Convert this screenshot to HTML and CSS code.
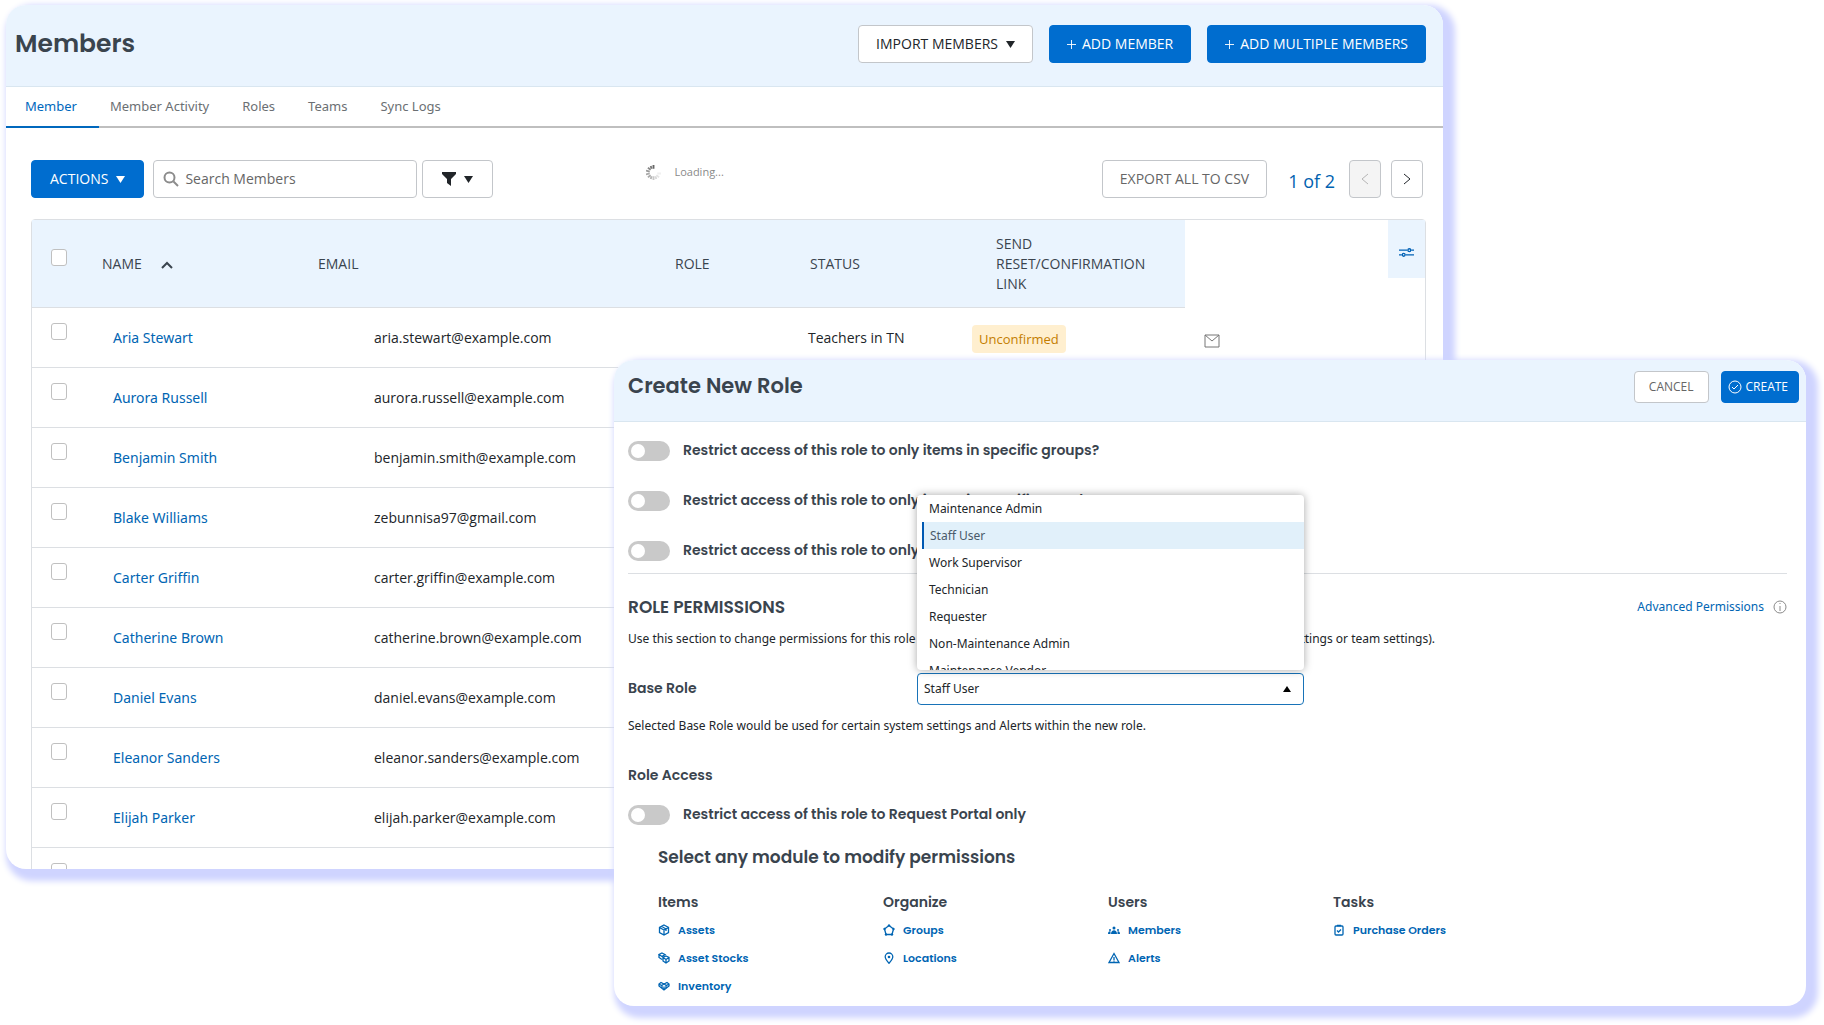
FILE: index.html
```html
<!DOCTYPE html>
<html lang="en">
<head>
<meta charset="utf-8">
<meta name="viewport" content="width=device-width, initial-scale=1">
<title>Members</title>
<link rel="stylesheet" href="styles.css">
</head>
<body>
<svg class="sprite" aria-hidden="true">
  <symbol id="i-down" viewBox="0 0 10 10"><path d="M0 1h10L5 9z"/></symbol>
  <symbol id="i-mail" viewBox="0 0 16 14"><path d="M1 1h14v12H1zM1 1l7 6 7-6" fill="none" stroke="currentColor"/></symbol>
</svg>
<main class="stage">
  <section class="card members" aria-labelledby="members-title">
    <header class="card-head">
      <h1 id="members-title">Members</h1>
      <div class="head-actions">
        <button class="btn" type="button">IMPORT MEMBERS <svg class="caret"><use href="#i-down"/></svg></button>
        <button class="btn primary" type="button"><svg class="plus" viewBox="0 0 10 10"><path d="M5 0v10M0 5h10"/></svg>ADD MEMBER</button>
        <button class="btn primary" type="button"><svg class="plus" viewBox="0 0 10 10"><path d="M5 0v10M0 5h10"/></svg>ADD MULTIPLE MEMBERS</button>
      </div>
    </header>
    <nav class="tabs" aria-label="Member sections">
      <a class="active" href="#">Member</a>
      <a href="#">Member Activity</a>
      <a href="#">Roles</a>
      <a href="#">Teams</a>
      <a href="#">Sync Logs</a>
    </nav>
    <div class="toolbar">
      <div class="tools">
        <button class="btn primary actions" type="button">ACTIONS <svg class="caret"><use href="#i-down"/></svg></button>
        <label class="search">
          <svg viewBox="0 0 16 16"><circle cx="6.500" cy="6.500" r="5" /><path d="M10.500 10.500L15 15"/></svg>
          <input type="text" placeholder="Search Members" aria-label="Search Members">
        </label>
        <button class="btn filter" type="button" aria-label="Filter">
          <svg class="funnel" viewBox="0 0 14 14"><path d="M0 0h14v2L9 7v7l-4-3V7L0 2z"/></svg>
          <svg class="caret"><use href="#i-down"/></svg>
        </button>
      </div>
      <div class="loading">
        <svg viewBox="0 0 16 16">
          <path d="M8 0v4" stroke="#666"/><path d="M5 1l1 3" stroke="#777"/><path d="M2 3l3 2" stroke="#888"/>
          <path d="M0 6l4 1" stroke="#999"/><path d="M0 10l4-1" stroke="#aaa"/><path d="M2 13l3-2" stroke="#aaa"/>
          <path d="M5 15l1-3" stroke="#b4b4b4"/><path d="M8 16v-4" stroke="#c8c8c8"/><path d="M11 15l-1-3" stroke="#d8d8d8"/>
          <path d="M14 13l-3-2" stroke="#e4e4e4"/><path d="M16 9h-4" stroke="#f0f0f0"/>
        </svg>
        <span>Loading...</span>
      </div>
      <div class="paging">
        <button class="btn muted" type="button">EXPORT ALL TO CSV</button>
        <span class="count">1 of 2</span>
        <button class="btn page" type="button" aria-label="Previous page" disabled><svg viewBox="0 0 8 12"><path d="M7 1L1 6l6 5"/></svg></button>
        <button class="btn page" type="button" aria-label="Next page"><svg viewBox="0 0 8 12"><path d="M1 1l6 5-6 5"/></svg></button>
      </div>
    </div>
    <div class="table-wrap">
      <table>
        <colgroup><col class="c-check"><col class="c-name"><col class="c-email"><col class="c-role"><col class="c-status"><col class="c-link"><col></colgroup>
        <thead>
          <tr>
            <th class="check"><input type="checkbox" aria-label="Select all members"></th>
            <th>NAME <svg class="sort" viewBox="0 0 12 8"><path d="M1 7l5-5 5 5"/></svg></th>
            <th>EMAIL</th>
            <th>ROLE</th>
            <th>STATUS</th>
            <th class="send">SEND RESET/CONFIRMATION LINK</th>
            <th class="config"><button type="button" aria-label="Choose columns"><svg viewBox="0 0 16 12"><path d="M0 4h9M13 4h3M0 9h3M7 9h9"/><circle cx="11" cy="4" r="1.500"/><circle cx="5" cy="9" r="1.500"/></svg></button></th>
          </tr>
        </thead>
        <tbody>
          <tr><td class="check"><input type="checkbox" aria-label="Select Aria Stewart"></td><td class="name"><a href="#">Aria Stewart</a></td><td class="email">aria.stewart@example.com</td><td></td><td class="team">Teachers in TN</td><td class="state"><span class="pill">Unconfirmed</span></td><td class="mail"><svg><use href="#i-mail"/></svg></td></tr>
          <tr><td class="check"><input type="checkbox" aria-label="Select Aurora Russell"></td><td class="name"><a href="#">Aurora Russell</a></td><td class="email">aurora.russell@example.com</td><td colspan="4"></td></tr>
          <tr><td class="check"><input type="checkbox" aria-label="Select Benjamin Smith"></td><td class="name"><a href="#">Benjamin Smith</a></td><td class="email">benjamin.smith@example.com</td><td colspan="4"></td></tr>
          <tr><td class="check"><input type="checkbox" aria-label="Select Blake Williams"></td><td class="name"><a href="#">Blake Williams</a></td><td class="email">zebunnisa97@gmail.com</td><td colspan="4"></td></tr>
          <tr><td class="check"><input type="checkbox" aria-label="Select Carter Griffin"></td><td class="name"><a href="#">Carter Griffin</a></td><td class="email">carter.griffin@example.com</td><td colspan="4"></td></tr>
          <tr><td class="check"><input type="checkbox" aria-label="Select Catherine Brown"></td><td class="name"><a href="#">Catherine Brown</a></td><td class="email">catherine.brown@example.com</td><td colspan="4"></td></tr>
          <tr><td class="check"><input type="checkbox" aria-label="Select Daniel Evans"></td><td class="name"><a href="#">Daniel Evans</a></td><td class="email">daniel.evans@example.com</td><td colspan="4"></td></tr>
          <tr><td class="check"><input type="checkbox" aria-label="Select Eleanor Sanders"></td><td class="name"><a href="#">Eleanor Sanders</a></td><td class="email">eleanor.sanders@example.com</td><td colspan="4"></td></tr>
          <tr><td class="check"><input type="checkbox" aria-label="Select Elijah Parker"></td><td class="name"><a href="#">Elijah Parker</a></td><td class="email">elijah.parker@example.com</td><td colspan="4"></td></tr>
          <tr><td class="check"><input type="checkbox" aria-label="Select member"></td><td colspan="6"></td></tr>
        </tbody>
      </table>
    </div>
  </section>

  <section class="card role" aria-labelledby="role-title">
    <header class="card-head">
      <h2 id="role-title">Create New Role</h2>
      <div class="head-actions">
        <button class="btn muted" type="button">CANCEL</button>
        <button class="btn primary" type="button"><svg class="tick" viewBox="0 0 14 14"><circle cx="7" cy="7" r="6"/><path d="M4 7l2 2 4-4"/></svg>CREATE</button>
      </div>
    </header>
    <div class="role-body">
      <div class="switches">
        <label class="switch"><input type="checkbox" role="switch"><span>Restrict access of this role to only items in specific groups?</span></label>
        <label class="switch"><input type="checkbox" role="switch"><span>Restrict access of this role to only items in specific members?</span></label>
        <label class="switch"><input type="checkbox" role="switch"><span>Restrict access of this role to only</span></label>
      </div>
      <div class="section-head">
        <h3>ROLE PERMISSIONS</h3>
        <div class="advanced">
          <a href="#">Advanced Permissions</a>
          <svg viewBox="0 0 14 14"><circle cx="7" cy="7" r="6"/><path d="M7 6v5M7 3v1"/></svg>
        </div>
      </div>
      <div class="note split"><span>Use this section to change permissions for this role</span><span>(excluding system settings or team settings).</span></div>
      <div class="base-role">
        <label for="base-role">Base Role</label>
        <div class="combo">
          <select id="base-role"><option>Staff User</option></select>
          <svg class="up" viewBox="0 0 8 6"><path d="M0 6h8L4 0z"/></svg>
          <ul class="menu">
            <li>Maintenance Admin</li>
            <li class="selected">Staff User</li>
            <li>Work Supervisor</li>
            <li>Technician</li>
            <li>Requester</li>
            <li>Non-Maintenance Admin</li>
            <li>Maintenance Vendor</li>
          </ul>
        </div>
      </div>
      <p class="note">Selected Base Role would be used for certain system settings and Alerts within the new role.</p>
      <h4>Role Access</h4>
      <label class="switch"><input type="checkbox" role="switch"><span>Restrict access of this role to Request Portal only</span></label>
      <div class="modules">
        <h3>Select any module to modify permissions</h3>
        <div class="module-grid">
          <div class="module"><h4>Items</h4>
            <a href="#"><svg viewBox="0 0 12 12"><path d="M6 1l4.500 2.500v5L6 11 1.500 8.500v-5zM1.500 3.500L6 6l4.500-2.500M6 6v5M3.500 2.300L8 5v2"/></svg>Assets</a>
            <a href="#"><svg viewBox="0 0 12 12"><path d="M4 1l3 1.500L4 4.500 1 2.500zM1 2.500v3l3 2M8 4l3 1.500v3.500L8 11 5 9V5.500zM5 5.500L8 7.500l3-2M8 7.500V11"/></svg>Asset Stocks</a>
            <a href="#"><svg viewBox="0 0 12 12"><path d="M3 2.500L1 4v2l5 4 5-4V4L9 2.500 6 4zM1 4l2.500 1.500L6 4l2.500 1.500L11 4M4 5.500V8M8 5.500V8M6 6.500v3"/></svg>Inventory</a>
          </div>
          <div class="module"><h4>Organize</h4>
            <a href="#"><svg viewBox="0 0 12 12"><path d="M6 1.500l4.500 3.500L9 10.500H3L1.500 5z"/><path class="solid" d="M6 0l1.500 1.500L6 3 4.500 1.500zM1.500 3.500L3 5 1.500 6.500 0 5zM10.500 3.500L12 5l-1.500 1.500L9 5zM3 9l1.500 1.500L3 12l-1.500-1.500zM9 9l1.500 1.500L9 12l-1.500-1.500z"/></svg>Groups</a>
            <a href="#"><svg viewBox="0 0 12 12"><path d="M6 11.300C3.500 8.500 2.200 6.800 2.200 4.800a3.800 3.800 0 0 1 7.600 0c0 2-1.300 3.700-3.800 6.500z"/><circle class="solid" cx="6" cy="5" r="1.300"/></svg>Locations</a>
          </div>
          <div class="module"><h4>Users</h4>
            <a href="#"><svg viewBox="0 0 12 12"><g class="solid"><circle cx="6" cy="4" r="1.500"/><circle cx="2" cy="6" r="1"/><circle cx="10" cy="6" r="1"/><path d="M3 10c0-5 6-5 6 0zM0 10c0-2 1-3 2.500-2.500V10zM12 10c0-2-1-3-2.500-2.500V10z"/></g></svg>Members</a>
            <a href="#"><svg viewBox="0 0 12 12"><path d="M6 1.500l5 9H1zM6 5v3M6 8.500v1"/></svg>Alerts</a>
          </div>
          <div class="module"><h4>Tasks</h4>
            <a href="#"><svg viewBox="0 0 12 12"><rect x="2" y="2" width="8" height="9" rx="1"/><path d="M4 1.500h4M4 6.500L5.500 8 8 5.500"/></svg>Purchase Orders</a>
          </div>
        </div>
      </div>
    </div>
  </section>
</main>
</body>
</html>
```
FILE: styles.css
```css
* { box-sizing: border-box; }

:root {
  --blue: #006dcf;
  --link: #0065b3;
  --tint: #eaf4fe;
  --line: #dcdfe3;
  --ink: #212529;
  --heading: #3a444e;
}

body {
  margin: 0;
  background: #fff;
  color: var(--ink);
  font: 14px/20px "Open Sans", "Noto Sans", sans-serif;
}

h1, h2, h3, h4, p, ul { margin: 0; padding: 0; }
h1, h2, h3, h4 { color: var(--heading); font-family: Poppins, Inter, sans-serif; font-weight: 600; }
a { color: var(--link); text-decoration: none; }
button, input, select { font: inherit; color: inherit; }
.sprite { display: none; }

.stage {
  display: grid;
  grid-template-columns: 608fr 829fr 363fr;
  grid-template-rows: 355px 509px auto;
  padding: 5px 18px 19px 6px;
}

.card {
  overflow: hidden;
  border-radius: 20px;
  background: #fff;
  box-shadow: 6px 6px 6px 6px #cfd4ff;
}
.members { grid-area: 1 / 1 / 3 / 3; }
.role { grid-area: 2 / 2 / 4 / 4; }

.card-head {
  display: flex;
  justify-content: space-between;
  align-items: flex-start;
  background: var(--tint);
  border-bottom: 1px solid #d9e6f0;
}
.head-actions { display: flex; gap: 16px; }

.btn {
  display: flex;
  align-items: center;
  justify-content: center;
  gap: 8px;
  height: 38px;
  padding: 0 17px;
  border: 1px solid #c3c6ca;
  border-radius: 4px;
  background: #fff;
  white-space: nowrap;
}
.btn.primary { border-color: var(--blue); background: var(--blue); color: #fff; }
.btn.muted { color: #666; }
.caret { width: 9px; height: 9px; fill: currentColor; }
.plus { width: 9px; height: 9px; margin-right: -2px; stroke: currentColor; fill: none; }

/* Members */
.members .card-head { height: 82px; padding: 20px 17px 0 9px; }
h1 { font-size: 25px; line-height: 38px; }

.tabs {
  display: flex;
  height: 41px;
  border-bottom: 2px solid #bfbfbf;
  font: 13px/38px "Noto Sans", "Open Sans", sans-serif;
}
.tabs a { height: 41px; padding: 0 22px 0 11px; color: #6b6f73; }
.tabs .active { padding-left: 19px; border-bottom: 2px solid #0068bd; color: #0068bd; }

.toolbar {
  display: flex;
  padding: 32px 20px 21px 25px;
}
.tools, .paging, .loading { display: flex; align-items: center; }
.btn.actions { margin-right: 9px; padding: 0 18px; }
.search {
  display: flex;
  align-items: center;
  gap: 6px;
  width: 264px;
  height: 38px;
  margin-right: 5px;
  padding: 0 9px;
  border: 1px solid #c3c6ca;
  border-radius: 4px;
}
.search svg { flex: none; width: 16px; height: 16px; fill: none; stroke: #8c8c8c; stroke-width: 2; }
.search input { width: 100%; padding: 0; border: 0; outline: 0; background: none; }
.search input::placeholder { color: #666; opacity: 1; }
.filter { width: 71px; }
.funnel { width: 14px; height: 14px; fill: currentColor; }
.loading { gap: 13px; height: 24px; margin-left: 153px; color: #8a8a8a; font-size: 11px; }
.loading svg { width: 15px; height: 15px; fill: none; stroke-width: 2; }
.paging { margin-left: auto; }
.count { margin: 4px 14px 0 21px; color: #0062b0; font-size: 18px; }
.page { width: 32px; padding: 0; }
.page + .page { margin-left: 10px; }
.page:disabled { background: #f4f4f4; color: #b5b5b5; }
.page svg { width: 8px; height: 12px; fill: none; stroke: currentColor; }

.table-wrap { margin: 0 17px 0 25px; border: 1px solid var(--line); border-radius: 4px; }
table { width: 100%; border-collapse: separate; border-spacing: 0; table-layout: fixed; }
.c-check { width: 58px; }
.c-name { width: 216px; }
.c-email { width: 357px; }
.c-role { width: 135px; }
.c-status { width: 162px; }
.c-link { width: 225px; }
th, td { padding: 0; border-bottom: 1px solid var(--line); text-align: left; vertical-align: middle; }
th { height: 88px; padding-left: 12px; background: var(--tint); color: var(--heading); font-weight: 400; }
td { height: 60px; }
.check { padding: 0 0 12px 19px; line-height: 0; }
.check input {
  width: 16px;
  height: 17px;
  margin: 0;
  border: 1px solid #c0c0c0;
  border-radius: 3px;
  background: #fff;
  appearance: none;
}
.sort { width: 12px; height: 8px; margin-left: 16px; fill: none; stroke: currentColor; stroke-width: 2; }
.send { padding: 0 36px; }
.config { padding: 0; border-bottom: 0; background: none; vertical-align: top; }
.config button { display: block; width: 37px; height: 58px; margin-left: auto; padding: 8px 0 0; border: 0; background: var(--tint); }
.config svg { width: 15px; height: 12px; fill: none; stroke: #0061b5; stroke-width: 1.4; }
.name { padding-left: 23px; font-family: "Noto Sans", "Open Sans", sans-serif; }
.email { padding-left: 68px; }
.team { padding-left: 10px; }
.state { padding: 3px 0 0 12px; }
.pill { display: inline-block; padding: 4px 7px; border-radius: 4px; background: #ffefcf; color: #c47d00; font-size: 13px; }
.mail { padding: 6px 0 0 19px; color: #777; }
.mail svg { display: block; width: 16px; height: 14px; }

/* Create New Role */
.role { font: 12px/16px "Noto Sans", "Open Sans", sans-serif; }
.role .card-head { height: 62px; padding: 11px 7px 0 14px; }
.role .head-actions { gap: 12px; }
.role .btn { height: 32px; padding: 0 14px; font: 12px/16px "Open Sans", sans-serif; }
.role .btn.primary { gap: 4px; padding: 0 10px 0 6px; }
h2 { font-size: 21px; line-height: 30px; }
.tick { width: 14px; height: 14px; fill: none; stroke: currentColor; }

.role-body { padding: 19px 19px 12px 14px; }
.switches { display: grid; gap: 30px; padding-bottom: 12px; border-bottom: 1px solid var(--line); }
.switch {
  display: flex;
  align-items: center;
  gap: 13px;
  height: 20px;
  color: var(--heading);
  font: 600 14px/20px Poppins, Inter, sans-serif;
  white-space: nowrap;
}
.switch span { padding-bottom: 2px; }
.switch input {
  display: flex;
  align-items: center;
  width: 42px;
  height: 20px;
  margin: 0;
  padding: 3px;
  border-radius: 10px;
  background: #c9c9c9;
  appearance: none;
}
.switch input::before { width: 14px; height: 14px; border-radius: 50%; background: #fff; content: ""; }

.section-head { display: flex; justify-content: space-between; align-items: center; margin-top: 22px; }
.section-head h3 { font-size: 17px; line-height: 22px; }
.advanced { display: flex; align-items: center; gap: 9px; }
.advanced svg { width: 14px; height: 14px; fill: none; stroke: #8a8a8a; }
.note { margin-top: 13px; }
.split { display: flex; justify-content: space-between; padding-right: 352px; }
.base-role { display: flex; align-items: center; margin-top: 26px; }
.base-role label { width: 289px; padding-bottom: 2px; color: var(--heading); font: 600 14px/20px Poppins, Inter, sans-serif; }
.combo { position: relative; width: 387px; }
.combo select {
  display: block;
  width: 100%;
  height: 32px;
  padding: 0 6px;
  border: 1px solid #1873b8;
  border-radius: 4px;
  background: #fff;
  appearance: none;
}
.up { position: absolute; top: 13px; right: 13px; width: 8px; height: 6px; }
.menu {
  position: absolute;
  bottom: 35px;
  left: 0;
  width: 100%;
  height: 175px;
  overflow: hidden;
  border-radius: 4px;
  background: #fff;
  box-shadow: 0 0 8px rgba(0, 0, 0, .35);
  list-style: none;
}
.menu li { height: 27px; padding-left: 12px; line-height: 27px; }
.menu .selected { margin-left: 5px; padding-left: 6px; border-left: 2px solid #0059b3; background: #e1f0fa; color: #4a5a6a; }

.role-body h4 { font-size: 14px; line-height: 20px; }
.role-body > h4 { margin: 31px 0 20px; }
.modules { padding: 19px 4px 0 30px; }
.modules h3 { font-size: 17px; line-height: 26px; }
.module-grid { display: grid; grid-template-columns: repeat(5, 1fr); margin-top: 22px; }
.module { display: grid; align-content: start; gap: 12px; }
.module h4 { margin-bottom: -2px; }
.module a { display: flex; align-items: center; gap: 8px; font: 600 11px/16px Poppins, Inter, sans-serif; }
.module svg { width: 12px; height: 12px; fill: none; stroke: currentColor; stroke-width: 1.3; }
.module .solid { fill: currentColor; stroke: none; }
```
